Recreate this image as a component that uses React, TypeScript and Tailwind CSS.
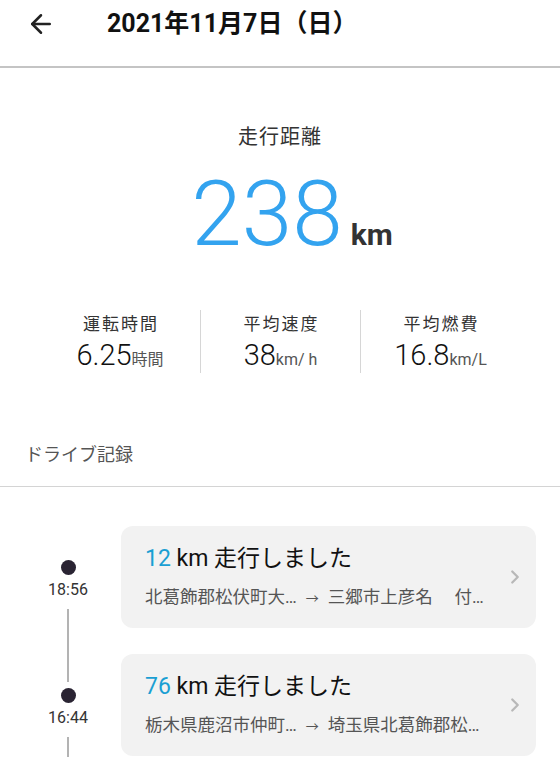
import { ArrowLeft, ChevronRight } from "lucide-react";

const FONT = { fontFamily: "Roboto, 'Noto Sans CJK JP', sans-serif" };

const stats = [
  { label: "運転時間", value: "6.25", unit: "時間" },
  { label: "平均速度", value: "38", unit: "km/ h" },
  { label: "平均燃費", value: "16.8", unit: "km/L" },
];

const trips = [
  { time: "18:56", km: "12", from: "北葛飾郡松伏町大…", to: "三郷市上彦名　 付…" },
  { time: "16:44", km: "76", from: "栃木県鹿沼市仲町…", to: "埼玉県北葛飾郡松…" },
];

export default function App() {
  return (
    <div className="w-[560px] h-[757px] overflow-hidden bg-white text-[#222]" style={FONT}>
      <header className="h-[68px] border-b-2 border-[#c4c4c4] flex items-start pt-[7px]">
        <ArrowLeft className="w-[30px] h-[30px] ml-[26px] mt-[2px] text-[#222]" strokeWidth={2} />
        <h1 className="ml-[51px] text-[25px] font-bold leading-[34px] text-[#111]">2021年11月7日（日）</h1>
      </header>

      <section className="flex flex-col items-center">
        <div className="mt-[55px] text-[20px] leading-[28px] text-[#333] tracking-[1px]">走行距離</div>
        <div className="mt-[13px] flex items-baseline ml-[24px]">
          <span className="text-[91px] font-light leading-[100px] text-[#33a3ef]">238</span>
          <span className="ml-[8px] text-[30px] font-bold text-[#333]">km</span>
        </div>
      </section>

      <div className="mt-[46px] mx-[40px] grid grid-cols-3">
        {stats.map((s, i) => (
          <div
            key={s.label}
            className={`flex flex-col items-center h-[63px] ${i > 0 ? "border-l border-[#d6d6d6]" : ""}`}
          >
            <div className="text-[17px] leading-[24px] text-[#333] mt-[2px] tracking-[2px] pl-[2px]">{s.label}</div>
            <div className="flex items-baseline mt-[4px]">
              <span className="text-[29px] font-light leading-[30px] text-[#111]">{s.value}</span>
              <span className="text-[16px] text-[#555]">{s.unit}</span>
            </div>
          </div>
        ))}
      </div>

      <div className="mt-[69px] ml-[25px] text-[18px] leading-[26px] text-[#555]">ドライブ記録</div>
      <div className="mt-[18px] border-t border-[#d4d4d4]" />

      <div className="mt-[39px] flex flex-col gap-[26px]">
        {trips.map((t) => (
          <div key={t.time} className="flex">
            <div className="w-[121px] flex flex-col items-center pl-[15px] shrink-0">
              <div className="w-[15px] h-[15px] rounded-full bg-[#2a2433] mt-[34px] shrink-0" />
              <div className="text-[16px] leading-[20px] text-[#333] mt-[5px] whitespace-nowrap">{t.time}</div>
              <div className="w-[2px] flex-1 bg-[#b3b3b3] mt-[9px] mb-[-54px]" />
            </div>
            <div className="w-[415px] h-[102px] rounded-[12px] bg-[#f2f2f2] flex items-center pl-[24px] pr-[10px]">
              <div className="flex-1">
                <div className="text-[23px] leading-[28px] text-[#111]">
                  <span className="text-[#1a9fd3]">{t.km}</span> km 走行しました
                </div>
                <div className="mt-[13px] text-[17.5px] leading-[22px] text-[#555] whitespace-nowrap">
                  {t.from}<span className="text-[13px] mx-[9px]">→</span>{t.to}
                </div>
              </div>
              <ChevronRight className="w-[22px] h-[22px] text-[#b8b8b8]" strokeWidth={2.5} />
            </div>
          </div>
        ))}
      </div>
    </div>
  );
}
